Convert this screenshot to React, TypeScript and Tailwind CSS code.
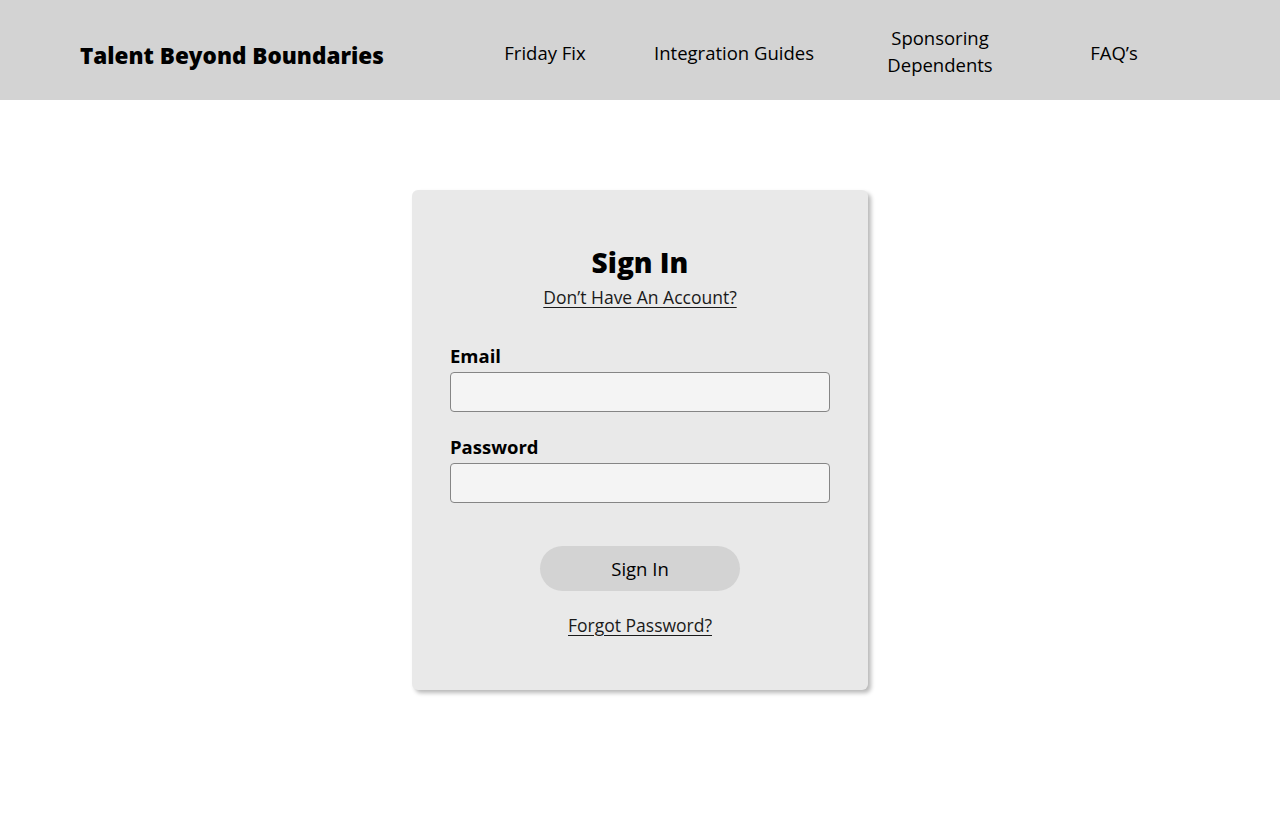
import React from 'react';

const navItems = [
  { label: 'Friday Fix', cls: 'w-[140px] ml-[5px]' },
  { label: 'Integration Guides', cls: 'w-[200px] ml-[19px]' },
  { label: 'Sponsoring Dependents', cls: 'w-[120px] ml-[46px] mb-[4px]' },
  { label: 'FAQ’s', cls: 'w-[100px] ml-[64px]' },
];

function Header() {
  return (
    <header className="h-[100px] bg-[#d3d3d3] flex items-center pl-[80px]">
      <div className="w-[390px] flex-none text-[22.5px] font-extrabold leading-[28px] text-black pt-[11px] whitespace-nowrap">
        Talent Beyond Boundaries
      </div>
      <nav className="flex items-center pt-[5px]">
        {navItems.map(item => (
          <a
            key={item.label}
            href="#"
            className={`${item.cls} flex-none text-center text-[18.5px] leading-[27px] text-black`}
          >
            {item.label}
          </a>
        ))}
      </nav>
    </header>
  );
}

function Field({ label, type }: { label: string; type: string }) {
  return (
    <label className="flex flex-col">
      <span className="text-[18.5px] font-bold leading-[26px] text-black">{label}</span>
      <input
        type={type}
        className="mt-[3px] h-[40px] w-full rounded-[4px] border border-[#858585] bg-[#f4f4f4] px-3 outline-none"
      />
    </label>
  );
}

export default function App() {
  return (
    <div className="min-h-[832px] bg-white font-['Open_Sans','Noto_Sans',sans-serif] text-black">
      <Header />
      <main className="flex justify-center pt-[90px]">
        <div className="w-[456px] rounded-[6px] bg-[#e9e9e9] px-[38px] pt-[54px] pb-[52px] shadow-[3px_3px_4px_rgba(0,0,0,0.28)]">
          <div className="flex flex-col items-center">
            <h1 className="text-[28px] font-extrabold leading-[36px]">Sign In</h1>
            <a href="#" className="mt-[4px] text-[17.5px] leading-[26px] text-[#1a1a1a] underline underline-offset-[3px]">
              Don’t Have An Account?
            </a>
          </div>

          <div className="mt-[33px] flex flex-col gap-[22px]">
            <Field label="Email" type="email" />
            <Field label="Password" type="password" />
          </div>

          <div className="mt-[43px] flex flex-col items-center">
            <button className="h-[45px] w-[200px] rounded-full bg-[#d3d3d3] text-[18.5px] text-black">
              Sign In
            </button>
            <a href="#" className="mt-[21px] text-[17.5px] leading-[26px] text-[#1a1a1a] underline underline-offset-[3px]">
              Forgot Password?
            </a>
          </div>
        </div>
      </main>
    </div>
  );
}
